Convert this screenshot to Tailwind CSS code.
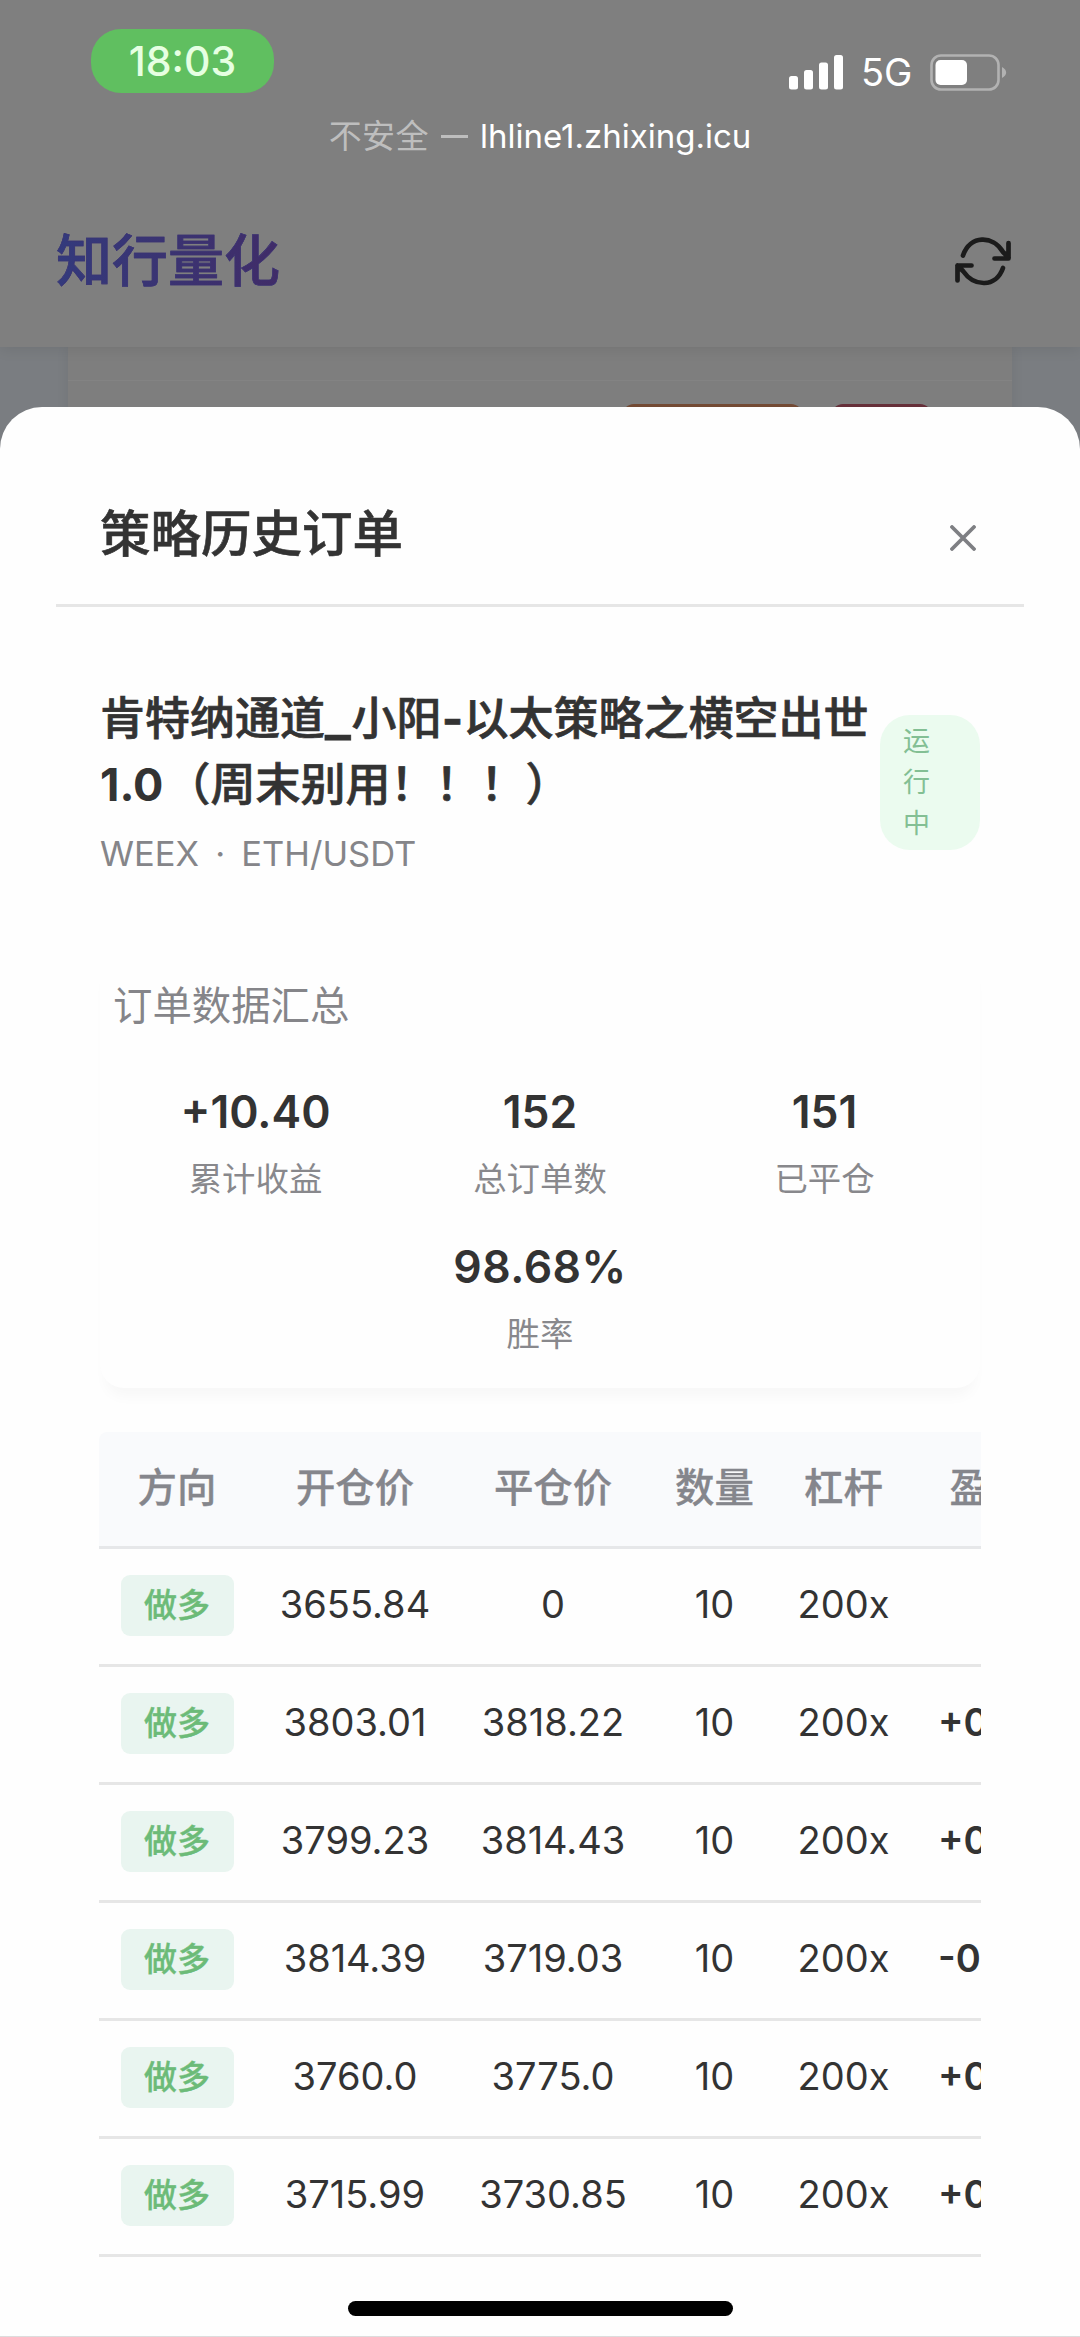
<!DOCTYPE html>
<html lang="zh-CN">
<head>
<meta charset="utf-8">
<title>知行量化</title>
<script src="https://cdn.jsdelivr.net/npm/@tailwindcss/browser@4"></script>
</head>
<body class="relative h-[2337px] w-[1080px] overflow-hidden bg-[#7a7d81] font-['Inter','Noto_Sans_CJK_SC',sans-serif] text-[#333]">
  <!-- dimmed page behind the sheet -->
  <header class="relative h-[347px] bg-[#7f7f7f] shadow-[0_2px_14px_rgba(0,0,0,0.09)]">
    <div class="flex h-[112px] items-start justify-between pt-[29px] pr-[72px] pl-[91px]">
      <div class="flex h-[64px] w-[183px] items-center justify-center rounded-[30px] bg-[#60bf60] text-[41px] leading-none font-medium text-[#e6ffe2]">18:03</div>
      <div class="flex items-center pt-[24px]">
        <svg class="h-[37px] w-[55px]" viewBox="0 0 55 37" fill="#fff"><rect x="0" y="22" width="9" height="13.500" rx="2.500"/><rect x="15" y="16" width="9" height="19.500" rx="2.500"/><rect x="30" y="8.500" width="9" height="27" rx="2.500"/><rect x="45" y="1" width="9" height="34.500" rx="2.500"/></svg>
        <span class="ml-[17px] w-[51px] pt-px text-[38px] leading-[37px] text-white">5G</span>
        <svg class="ml-[18px] h-[37px] w-[78px]" viewBox="0 0 78 37"><rect x="1.500" y="1.500" width="67" height="34" rx="9.500" fill="none" stroke="#b2b2b2" stroke-width="2.600"/><rect x="5.500" y="6" width="31.500" height="25" rx="5" fill="#fff"/><path d="M72 13c5.500 3 5.500 8 0 11z" fill="#b2b2b2"/></svg>
      </div>
    </div>
    <div class="flex h-[48px] items-center justify-center gap-[12px] text-[33px] leading-none"><span class="flex items-center gap-[12px] text-[#bebebe]"><span class="tracking-[0.4px]">不安全</span><span class="h-[3px] w-[27px] bg-[#bebebe]"></span></span><span class="text-white">lhline1.zhixing.icu</span></div>
    <div class="flex h-[201px] items-center justify-between pr-[67px] pl-[56px]">
      <h1 class="bg-linear-to-r from-[#333a7c] to-[#402c68] bg-clip-text text-[56px] leading-[70px] font-medium text-transparent [-webkit-text-stroke:0.6px_#3b3474]">知行量化</h1>
      <svg class="h-[60px] w-[60px]" viewBox="0 0 60 60" fill="none" stroke="#1b1b1b" stroke-width="4.700" stroke-linecap="round" stroke-linejoin="round"><path d="M10 24.500C17 4 40 4 50 21L55.500 26.500M55.500 12v15.500H41.500"/><path d="M50 37C43 57 21 56 10 40L4.500 34.500M4.500 49.500V34.500H18.500"/></svg>
    </div>
  </header>
  <section class="mx-auto -mt-px h-[220px] w-[944px] bg-[#7e7e7e] shadow-[0_0_12px_rgba(0,0,0,0.07)]">
    <div class="flex h-[35px] border-b border-[#838383]"></div>
    <div class="flex justify-end gap-[28px] pt-[23px] pr-[80px]">
      <div class="h-[70px] w-[181px] rounded-[12px] bg-[#734a34]"></div>
      <div class="h-[70px] w-[101px] rounded-[12px] bg-[#662f39]"></div>
    </div>
  </section>

  <!-- bottom sheet -->
  <main class="absolute inset-x-0 top-[407px] bottom-0 rounded-t-[42px] border-b border-[#dcdcdc] bg-[#fefefe]">
    <div class="mx-[56px] flex h-[200px] items-center justify-between border-b-[3px] border-[#e6e6e6] pt-[56px] pr-[48px] pl-[44px]">
      <h2 class="text-[50.500px] leading-[60px] font-medium [-webkit-text-stroke:0.6px_#333]">策略历史订单</h2>
      <svg class="mt-[9px] h-[26px] w-[26px]" viewBox="0 0 26 26" stroke="#7e7f83" stroke-width="3.800" stroke-linecap="round"><path d="M2 2l22 22M24 2L2 24"/></svg>
    </div>

    <div class="mx-[100px] mt-[77px] flex items-center justify-between">
      <div>
        <h3 class="w-[775px] pt-[2px] text-[45px] leading-[66px] font-medium whitespace-nowrap [-webkit-text-stroke:0.7px_#333]">肯特纳通道<span class="mr-px inline-block origin-left scale-x-[1.2] pr-[4px] font-bold">_</span>小阳<span class="px-[0.5px] font-bold">-</span>以太策略之横空出世<br><span class="font-bold [-webkit-text-stroke:0]">1.0</span><span class="ml-[2px]">（周末别用！！！）</span></h3>
        <p class="mt-[9px] text-[34.500px] leading-[54px] text-[#858589] [word-spacing:6.5px]">WEEX · ETH/USDT</p>
      </div>
      <div class="h-[135px] w-[100px] rounded-[30px] bg-[#ebfbef] py-[6px] pr-[49px] pl-[23px] text-[27px] leading-[41px] text-[#83bf94]">运行中</div>
    </div>

    <section class="mx-[100px] mt-[70px] h-[437px] rounded-[24px] bg-[#fefefe] px-[13px] pt-[25px] shadow-[0_14px_14px_-6px_rgba(0,0,0,0.03)]">
      <h4 class="text-[39.400px] leading-[60px] text-[#858589]">订单数据汇总</h4>
      <div class="mt-[43px] flex flex-wrap justify-center text-center">
        <div class="h-[155px] w-[284.500px] pt-[3px]"><div class="text-[44.500px] leading-[60px] font-semibold">+10.40</div><div class="mt-[7px] text-[33.400px] leading-[60px] text-[#88888c]">累计收益</div></div>
        <div class="h-[155px] w-[284.500px] pt-[3px]"><div class="text-[44.500px] leading-[60px] font-semibold">152</div><div class="mt-[7px] text-[33.400px] leading-[60px] text-[#88888c]">总订单数</div></div>
        <div class="h-[155px] w-[284.500px] pt-[3px]"><div class="text-[44.500px] leading-[60px] font-semibold">151</div><div class="mt-[7px] text-[33.400px] leading-[60px] text-[#88888c]">已平仓</div></div>
        <div class="h-[155px] w-[284.500px] pt-[3px]"><div class="text-[44.500px] leading-[60px] font-semibold tracking-[0.5px]">98.68%</div><div class="mt-[7px] text-[33.400px] leading-[60px] text-[#88888c]">胜率</div></div>
      </div>
    </section>

    <div class="mr-[99px] ml-[99px] mt-[44px] overflow-hidden rounded-tl-[8px]">
      <table class="w-[970px] table-fixed border-collapse text-center text-[38px] leading-none whitespace-nowrap">
        <colgroup><col class="w-[156px]"><col class="w-[200px]"><col class="w-[196px]"><col class="w-[127px]"><col class="w-[131px]"><col class="w-[160px]"></colgroup>
        <thead>
          <tr class="h-[115px] border-b-[3px] border-[#e6e7e9] bg-[#f9fafc] text-[39.400px] text-[#85868c] [-webkit-text-stroke:0.3px_#85868c]">
            <th class="font-medium">方向</th><th class="font-medium">开仓价</th><th class="font-medium">平仓价</th><th class="font-medium">数量</th><th class="font-medium">杠杆</th><th class="font-medium">盈亏</th>
          </tr>
        </thead>
        <tbody id="rows"></tbody>
      </table>
    </div>
    <div class="mx-auto mt-[44px] h-[15px] w-[385px] rounded-full bg-black"></div>
  </main>
<template id="row">
  <tr class="h-[118px] border-b-[3px] border-[#e6e6e6]">
    <td class="pb-px"><span class="inline-flex h-[61px] w-[113px] items-center justify-center rounded-[9px] bg-[#e9f5f0] align-middle text-[33px] font-medium text-[#6cbb78] [-webkit-text-stroke:0.4px_#6cbb78]">做多</span></td>
    <td class="pb-[4px]"></td><td class="pb-[4px]"></td><td class="pb-[4px]">10</td><td class="pb-[4px]">200x</td><td class="pb-[4px] pl-[29px] text-left font-semibold"></td>
  </tr>
</template>
<script>
  const orders = [
    ['3655.84', '0', ''],
    ['3803.01', '3818.22', '+0.15'],
    ['3799.23', '3814.43', '+0.15'],
    ['3814.39', '3719.03', '-0.95'],
    ['3760.0', '3775.0', '+0.15'],
    ['3715.99', '3730.85', '+0.15']
  ];
  const row = document.getElementById('row');
  for (const [open, close, profit] of orders) {
    const cells = row.content.cloneNode(true);
    const td = cells.querySelectorAll('td');
    td[1].textContent = open;
    td[2].textContent = close;
    td[5].textContent = profit;
    document.getElementById('rows').append(cells);
  }
</script>
</body>
</html>
